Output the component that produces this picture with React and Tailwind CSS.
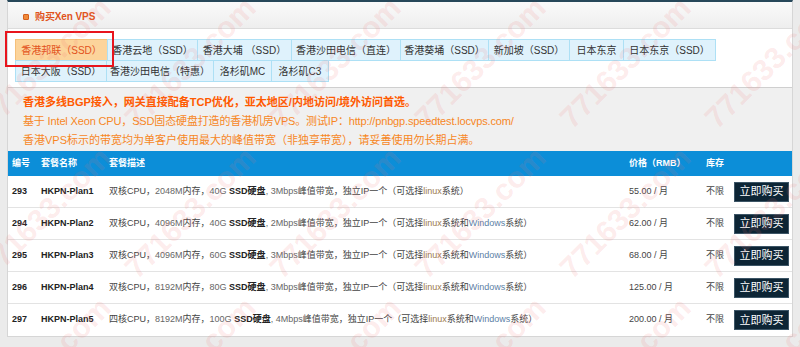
import React from "react";

const tabs1 = [
  { t: "香港邦联（SSD）", w: "w-[93px]", active: true },
  { t: "香港云地（SSD）", w: "w-[91px]" },
  { t: "香港大埔 （SSD）", w: "w-[95px]" },
  { t: "香港沙田电信（直连）", w: "w-[110px]" },
  { t: "香港葵埇（SSD）", w: "w-[89px]" },
  { t: "新加坡（SSD）", w: "w-[82px]" },
  { t: "日本东京", w: "w-[55px]" },
  { t: "日本东京（SSD）", w: "w-[93px]" },
];
const tabs2 = [
  { t: "日本大阪（SSD）", w: "w-[92px]" },
  { t: "香港沙田电信（特惠）", w: "w-[108px]" },
  { t: "洛杉矶MC", w: "w-[59px]" },
  { t: "洛杉矶C3", w: "w-[58px]" },
];

const rows = [
  { id: "293", name: "HKPN-Plan1", core: "双核", ram: "2048M", disk: "40G", bw: "3Mbps", win: false, price: "55.00 / 月" },
  { id: "294", name: "HKPN-Plan2", core: "双核", ram: "4096M", disk: "40G", bw: "2Mbps", win: true, price: "62.00 / 月" },
  { id: "295", name: "HKPN-Plan3", core: "双核", ram: "4096M", disk: "60G", bw: "3Mbps", win: true, price: "68.00 / 月" },
  { id: "296", name: "HKPN-Plan4", core: "双核", ram: "8192M", disk: "80G", bw: "3Mbps", win: true, price: "125.00 / 月" },
  { id: "297", name: "HKPN-Plan5", core: "四核", ram: "8192M", disk: "100G", bw: "4Mbps", win: true, price: "200.00 / 月" },
];

const marks = [];
for (let r = 0; r < 4; r++) {
  for (let c = 0; c < 7; c++) {
    marks.push({ x: c * 145 - 40, y: r * 150 - 60 });
  }
}

function Tab({ t, w, active }) {
  return (
    <div
      className={
        "h-[22px] flex items-center justify-center border whitespace-nowrap -ml-px " +
        w +
        (active
          ? " bg-[#fcd49b] border-[#f5c07a] text-[#e2521b]"
          : " bg-[#dff2fc] border-[#ade0f5] text-[#333]")
      }
    >
      {t}
    </div>
  );
}

const cols = "grid grid-cols-[29px_68px_520px_77px_28px_1fr] items-center pl-[4px]";

export default function App() {
  return (
    <div className="relative w-[800px] h-[347px] overflow-hidden bg-[#ebebeb] font-['Liberation_Sans','Noto_Sans_CJK_SC',sans-serif]">
      <div className="ml-[7px] w-[786px] bg-white border-x border-b border-[#d6d6d6] border-t-2 border-t-[#27485a]">
        {/* title bar */}
        <div className="h-[27px] flex items-center pt-[3px] pl-[15px] gap-[6px] bg-gradient-to-b from-[#fafafa] to-[#eeeeee] border-b border-[#dcdcdc]">
          <span className="w-[6px] h-[6px] bg-[#f08a3a] border border-[#d45f1c] rounded-[1px]" />
          <span className="text-[10px] font-bold text-[#e0531c] tracking-[-0.1px]">
            购买Xen VPS
          </span>
        </div>

        {/* tabs */}
        <div className="pt-[10px] pl-[8px] pb-[5px] text-[10px]">
          <div className="flex">
            {tabs1.map((x) => (
              <Tab key={x.t} {...x} />
            ))}
          </div>
          <div className="flex -mt-px">
            {tabs2.map((x) => (
              <Tab key={x.t} {...x} />
            ))}
          </div>
        </div>

        {/* info */}
        <div className="h-[64px] bg-[#f0f0f0] border-t border-[#cfcfcf] pl-[15px] pt-[2px] flex flex-col justify-center gap-[5px] text-[11px] leading-[14px]">
          <div className="font-bold text-[#ff5a00]">
            香港多线BGP接入，网关直接配备TCP优化，亚太地区/内地访问/境外访问首选。
          </div>
          <div className="text-[#f7871f] tracking-[-0.15px]">
            基于 Intel Xeon CPU，SSD固态硬盘打造的香港机房VPS。测试IP：http://pnbgp.speedtest.locvps.com/
          </div>
          <div className="text-[#f7871f]">
            香港VPS标示的带宽均为单客户使用最大的峰值带宽（非独享带宽），请妥善使用勿长期占满。
          </div>
        </div>

        {/* table */}
        <div className="text-[9px]">
          <div className={"h-[25px] bg-[#0c8ed8] text-white font-bold " + cols}>
            <div>编号</div>
            <div>套餐名称</div>
            <div>套餐描述</div>
            <div>价格（RMB）</div>
            <div>库存</div>
            <div />
          </div>
          {rows.map((r, i) => (
            <div
              key={r.id}
              className={
                "h-[32px] text-[#333] " +
                cols +
                (i < rows.length - 1 ? " border-b border-[#e3e3e3]" : "")
              }
            >
              <div className="font-bold text-[#222]">{r.id}</div>
              <div className="font-bold text-[#222]">{r.name}</div>
              <div className="whitespace-nowrap text-[#444]">
                {r.core}CPU，<span className="text-[#666]">{r.ram}</span>内存，
                <span className="text-[#666]">{r.disk}</span> <b className="text-[#222]">SSD硬盘</b>
                <span className="text-[#666]">, {r.bw}</span>峰值带宽，独立IP一个（可选择
                <span className="text-[#9c7a4e]">linux</span>系统
                {r.win ? (
                  <>
                    和<span className="text-[#5d7fa6]">Windows</span>系统
                  </>
                ) : null}
                ）
              </div>
              <div className="text-[#444]">{r.price}</div>
              <div className="text-[#444]">不限</div>
              <div>
                <button className="w-[55px] h-[20px] bg-[#0d2535] border border-[#3c5566] text-white text-[11px] flex items-center justify-center">
                  立即购买
                </button>
              </div>
            </div>
          ))}
        </div>
      </div>

      {/* annotation box */}
      <div className="absolute left-[5px] top-[31px] w-[109px] h-[36px] border-2 border-[#e8141c] pointer-events-none" />

      {/* watermarks */}
      {marks.map((m, i) => (
        <div
          key={i}
          className="absolute pointer-events-none text-[30px] font-bold text-[#f07070]/15 -rotate-45 whitespace-nowrap font-['Liberation_Sans',sans-serif]"
          style={{ left: m.x, top: m.y + 100 }}
        >
          771633.com
        </div>
      ))}
    </div>
  );
}
